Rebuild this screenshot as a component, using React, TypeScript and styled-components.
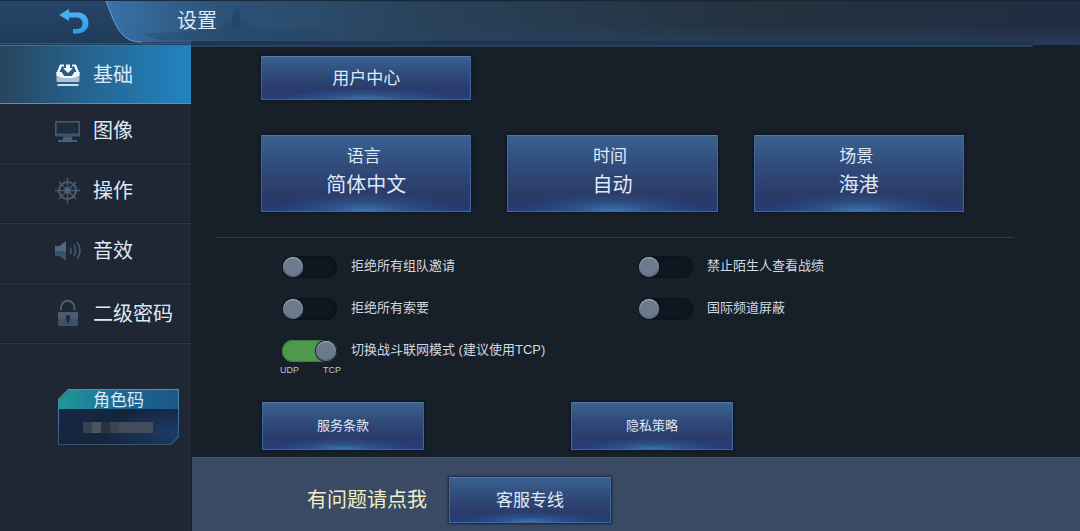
import React, { useState } from "react";
import styled, { createGlobalStyle } from "styled-components";

const GlobalStyle = createGlobalStyle`
  *, *::before, *::after { box-sizing: border-box; }
  html, body { margin: 0; background: #171f28; }
  body, button, input { font-family: "Noto Sans CJK SC", "Noto Sans", sans-serif; }
  button { margin: 0; padding: 0; border: 0; background: none; color: inherit; cursor: pointer; }
`;

const Page = styled.div`
  display: flex;
  flex-direction: column;
  min-height: 100vh;
  color: #dfe8f6;
`;

const Header = styled.header`
  position: relative;
  z-index: 1;
  display: flex;
  align-items: flex-start;
  height: 45px;
  background:
    linear-gradient(180deg, #13202e 0, rgba(19, 32, 46, 0) 2px),
    linear-gradient(0deg, rgba(42, 66, 102, 0.7) 0, rgba(42, 66, 102, 0) 20px),
    linear-gradient(90deg, #2d5379 0, #2c4b69 25%, #273d52 48%, #24323f 70%, #222c43 100%);

  &::after {
    content: "";
    position: absolute;
    left: 191px;
    right: 47px;
    top: 41px;
    height: 6px;
    background: linear-gradient(180deg, #1f3650 0, #1f3650 4px, #27415f 4px);
  }
`;

const HeaderArt = styled.svg`
  position: absolute;
  left: 0;
  top: 0;
`;

const BackButton = styled.button`
  position: relative;
  display: flex;
  width: 32px;
  height: 28px;
  margin: 8px 87px 0 58px;
`;

const Title = styled.h1`
  position: relative;
  margin: 0;
  font-size: 20px;
  font-weight: 400;
  line-height: 40px;
`;

const Body = styled.div`
  display: flex;
  flex: 1;
`;

const Sidebar = styled.aside`
  flex: 0 0 192px;
  background: #1e2733;
  border-right: 1px solid #171e29;
`;

const Nav = styled.nav`
  display: flex;
  flex-direction: column;
`;

const NavItem = styled.button<{ $active?: boolean }>`
  display: flex;
  align-items: center;
  gap: 12px;
  height: 60px;
  padding: 0 0 8px 55px;
  font-size: 20px;
  line-height: 28px;
  text-align: left;
  border-bottom: 1px solid #2b3542;
  box-shadow: inset 0 -1px 0 #19212c;

  &:last-child { padding-bottom: 2px; }

  ${(p) =>
    p.$active &&
    `
    height: 59px;
    padding-bottom: 2px;
    background: linear-gradient(90deg, #27455f 0, #26638f 45%, #2184c0 100%);
    border-top: 1px solid #3b7199;
    border-bottom: 1px solid #4a97c6;
    box-shadow: none;
  `}
`;

const CodeCard = styled.button`
  display: block;
  width: 121px;
  margin: 45px 0 0 58px;
  padding: 1px;
  background: linear-gradient(180deg, #4a94b4 0, #44759a 50%, #36526f 100%);
  clip-path: polygon(10px 0, 100% 0, 100% calc(100% - 8px), calc(100% - 8px) 100%, 0 100%, 0 10px);
`;

const CodeCardInner = styled.span`
  display: block;
  background:
    radial-gradient(ellipse at 100% 80%, #1c3d68 0, rgba(28, 61, 104, 0) 45%),
    linear-gradient(160deg, #16294a 0, #14253d 50%, #15263f 100%);
  clip-path: polygon(10px 0, 100% 0, 100% calc(100% - 8px), calc(100% - 8px) 100%, 0 100%, 0 10px);
`;

const CodeTitle = styled.span`
  display: block;
  height: 19px;
  font-size: 17px;
  line-height: 18px;
  text-align: center;
  background: linear-gradient(90deg, #1f9a93 0, #21829a 25%, #1d6893 50%, #1c5788 100%);
`;

const Mosaic = styled.span`
  display: flex;
  height: 35px;
  padding: 13px 25px 11px 24px;
`;

const MosaicBlock = styled.span<{ $tone: string; $grow: number }>`
  flex: ${(p) => p.$grow};
  background: ${(p) => p.$tone};
`;

const Main = styled.main`
  display: flex;
  flex: 1;
  flex-direction: column;
  min-width: 0;
`;

const PanelButton = styled.button<{ $height: number; $size: number }>`
  display: flex;
  flex-direction: column;
  align-items: center;
  justify-content: center;
  height: ${(p) => p.$height}px;
  padding-bottom: 3px;
  font-size: ${(p) => p.$size}px;
  line-height: 28px;
  border: 1px solid #41669a;
  border-top-color: #55799f;
  background:
    radial-gradient(ellipse 42% 24% at 50% 100%, #3d75ad 0, rgba(52, 100, 158, 0.5) 45%, rgba(46, 86, 146, 0) 100%),
    linear-gradient(0deg, rgba(34, 66, 138, 0.7) 0, rgba(34, 66, 138, 0) 10px),
    linear-gradient(180deg, #3a6291 0, #304c7b 38%, #2b3d6c 72%, #263763 100%);
  box-shadow: 0 0 2px 1px rgba(10, 20, 42, 0.7);
`;

const TileButton = styled(PanelButton)`
  line-height: 29px;
  padding-bottom: 9px;
`;

const ButtonCaption = styled.span`
  padding-right: 5px;
  font-size: 17px;
`;

const Tiles = styled.section`
  display: grid;
  grid-template-columns: repeat(3, 1fr);
  gap: 35px 36px;
  padding: 11px 116px 25px 69px;
`;

const FullRow = styled.div`
  display: grid;
  grid-column: 1 / -1;
  grid-template-columns: subgrid;
`;

const Divider = styled.hr`
  width: auto;
  height: 1px;
  margin: 0 66px 0 25px;
  border: 0;
  background: #303b48;
`;

const Toggles = styled.section`
  display: grid;
  grid-template-columns: 1fr 1fr;
  gap: 20px 0;
  padding: 18px 86px 26px 90px;
`;

const ToggleItem = styled.div`
  display: grid;
  grid-template-columns: 55px 1fr;
  column-gap: 14px;
  align-items: start;
`;

const ToggleLabel = styled.label`
  font-family: "Liberation Sans", "Noto Sans CJK SC", sans-serif;
  font-size: 13px;
  line-height: 20px;
  white-space: nowrap;
  color: #d2d8e0;
`;

const Switch = styled.input`
  appearance: none;
  width: 55px;
  height: 22px;
  margin: 0;
  padding: 1px;
  border-radius: 11px;
  background: #0f161f;
  box-shadow: inset 0 0 2px 1px #0b1119;
  cursor: pointer;

  &::before {
    content: "";
    display: block;
    width: 20px;
    height: 20px;
    border-radius: 50%;
    background: #6c7a8d;
    box-shadow: inset 0 1px 1px #a9b4bf, inset 0 -1px 1px #56616f, 0 0 1px 1px #121a24;
  }

  &:checked {
    background: #4d9a4e;
    box-shadow: inset 0 0 1px 1px #3c7f41;
  }

  &:checked::before { margin-left: auto; }
`;

const Captions = styled.div`
  display: flex;
  justify-content: space-between;
  margin: 2px -4px 0 -2px;
  font-family: "Liberation Sans", sans-serif;
  font-size: 9px;
  line-height: 12px;
  color: #bcc4ce;
`;

const Links = styled.section`
  display: grid;
  grid-template-columns: 1fr 1fr;
  column-gap: 147px;
  padding: 0 347px 7px 70px;
`;

const Footer = styled.footer`
  display: flex;
  flex: 1;
  align-items: flex-start;
  gap: 22px;
  min-height: 74px;
  padding: 19px 20px 8px 115px;
  background: #3a4a64;
  border-top: 1px solid #455672;
`;

const FooterText = styled.span`
  font-size: 20px;
  line-height: 44px;
  color: #f0eec6;
`;

const SupportSlot = styled.div`
  display: grid;
  flex: 0 0 162px;
`;

function HeaderDrawing() {
  return (
    <HeaderArt width="420" height="45" viewBox="0 0 420 45" aria-hidden="true">
      <defs>
        <linearGradient id="left" x1="0" y1="0" x2="0" y2="1">
          <stop offset="0" stopColor="#25456a" />
          <stop offset="1" stopColor="#1e3b58" />
        </linearGradient>
        <linearGradient id="tab" x1="0" y1="0" x2="1" y2="0">
          <stop offset="0" stopColor="#3978b2" stopOpacity="0.9" />
          <stop offset="0.3" stopColor="#386998" stopOpacity="0.75" />
          <stop offset="1" stopColor="#2c4b69" stopOpacity="0" />
        </linearGradient>
        <linearGradient id="shade" x1="0" y1="0" x2="1" y2="0">
          <stop offset="0" stopColor="#22415f" stopOpacity="0" />
          <stop offset="0.4" stopColor="#22415f" stopOpacity="0.4" />
          <stop offset="1" stopColor="#22415f" stopOpacity="0" />
        </linearGradient>
      </defs>
      <path d="M0 1H106C111 14 115 26 122 34Q128 42 142 42V45H0Z" fill="url(#left)" />
      <path d="M106 1C111 14 115 26 122 34Q128 42 142 42H420V1Z" fill="url(#tab)" />
      <path d="M106 1C111 14 115 26 122 34Q128 42 142 42H420V1Z" fill="url(#shade)" />
      <path
        d="M142 34L176 32L205 29L222 27L225 21L232 20L234 14L236 9L238 8L240 14L242 20L248 21L252 27L275 29L338 32L328 40H158Z"
        fill="#213f5c"
        opacity="0.3"
      />
      <path d="M232 27V16L236 8L240 15V27Z" fill="#213f5c" opacity="0.35" />
      <path d="M106 1C111 14 115 26 122 34Q128 42 142 42" fill="none" stroke="#6f9ac2" strokeWidth="1" />
      <path d="M0 43.5H191" stroke="#2b5880" strokeWidth="1" />
    </HeaderArt>
  );
}

function BackIcon() {
  return (
    <svg width="32" height="28" viewBox="0 0 32 28" aria-hidden="true">
      <defs>
        <linearGradient id="back" x1="0" y1="0" x2="0" y2="1">
          <stop offset="0" stopColor="#4bb6f5" />
          <stop offset="1" stopColor="#3598e4" />
        </linearGradient>
      </defs>
      <path
        d="M1 7L11 1V4.500H20C26 4.500 30.500 9 30.500 15S26 25.500 19 25.500H15V21H19C22.500 21 24.500 18.500 24.500 15.500S22.500 9.500 19 9.500H11V13Z"
        fill="url(#back)"
      />
    </svg>
  );
}

function Icon({ children }: { children: React.ReactNode }) {
  return (
    <svg width="26" height="28" viewBox="0 0 26 28" aria-hidden="true">
      {children}
    </svg>
  );
}

const basicIcon = (
  <Icon>
    <path d="M1.500 13L5 4.500H9V6.500H6.800L4.200 13ZM24.500 13L21 4.500H17V6.500H19.200L21.800 13Z" fill="#f2f7fc" />
    <path d="M1.500 12H6.500L9 16H17L19.500 12H24.500V20.500Q24.500 22 23 22H3Q1.500 22 1.500 20.500Z" fill="#aebfd6" />
    <path d="M1.500 12H6.500L9 16H17L19.500 12H24.500V15.500L18.500 18H7.500L1.500 15.500Z" fill="#f2f7fc" />
    <path d="M11 4.500H15V8H18L13 13L8 8H11Z" fill="#f2f7fc" />
    <path d="M2.500 25H23.500" stroke="#e2ebf4" strokeWidth="1.800" />
  </Icon>
);

const displayIcon = (
  <Icon>
    <rect x="0.800" y="5.800" width="23.400" height="13" fill="#1f2c3a" stroke="#4d6073" strokeWidth="1.400" />
    <path d="M0.200 17.500H24.800V20.500H0.200Z" fill="#3d546c" />
    <path d="M8.500 20.500H16.500L17.500 24H22V26H3V24H7.500Z" fill="#45607c" />
  </Icon>
);

const wheelIcon = (
  <Icon>
    <g stroke="#4c5c6d" fill="none">
      <circle cx="12.500" cy="14.500" r="8.500" strokeWidth="2" />
      <path
        d="M12.500 1.500V27.500M0 14.500H25M3.800 5.800L21.200 23.200M21.200 5.800L3.800 23.200"
        strokeWidth="1.300"
      />
    </g>
    <circle cx="12.500" cy="14.500" r="3.200" fill="#48647f" />
  </Icon>
);

const soundIcon = (
  <Icon>
    <path d="M0 10H4.500L11 5V24.500L4.500 20H0Z" fill="#4a6b85" />
    <path d="M0 15H11V24.500L4.500 20H0Z" fill="#3b5369" />
    <path d="M15 11.500Q17.500 14.700 15 18" fill="none" stroke="#435365" strokeWidth="1.800" />
    <path d="M19 9Q22 14.500 19 20" fill="none" stroke="#435365" strokeWidth="1.800" />
    <path d="M22 6Q28 14.500 22 23" fill="none" stroke="#435365" strokeWidth="1.800" />
  </Icon>
);

const lockIcon = (
  <Icon>
    <path d="M6 11V8.500A6.700 6.700 0 0 1 19.400 8.500V11" fill="none" stroke="#4d5b6b" strokeWidth="2" />
    <rect x="3" y="13" width="20" height="14" rx="1" fill="#4a5b6f" />
    <path d="M3 20H23V26Q23 27 22 27H4Q3 27 3 26Z" fill="#3f5165" />
    <path d="M13 16A2.400 2.400 0 0 1 14.200 20.400V23.500H11.800V20.400A2.400 2.400 0 0 1 13 16Z" fill="#1e2733" />
  </Icon>
);

const navItems = [
  { label: "基础", icon: basicIcon },
  { label: "图像", icon: displayIcon },
  { label: "操作", icon: wheelIcon },
  { label: "音效", icon: soundIcon },
  { label: "二级密码", icon: lockIcon },
];

const tiles = [
  { caption: "语言", value: "简体中文" },
  { caption: "时间", value: "自动" },
  { caption: "场景", value: "海港" },
];

const toggles = [
  { id: "team", label: "拒绝所有组队邀请" },
  { id: "stranger", label: "禁止陌生人查看战绩" },
  { id: "request", label: "拒绝所有索要" },
  { id: "channel", label: "国际频道屏蔽" },
  { id: "network", label: "切换战斗联网模式 (建议使用TCP)", on: true, captions: ["UDP", "TCP"] },
];

export default function App() {
  const [active, setActive] = useState("基础");

  return (
    <Page>
      <GlobalStyle />
      <Header>
        <HeaderDrawing />
        <BackButton aria-label="返回">
          <BackIcon />
        </BackButton>
        <Title>设置</Title>
      </Header>
      <Body>
        <Sidebar>
          <Nav>
            {navItems.map((item) => (
              <NavItem key={item.label} $active={item.label === active} onClick={() => setActive(item.label)}>
                {item.icon}
                {item.label}
              </NavItem>
            ))}
          </Nav>
          <CodeCard>
            <CodeCardInner>
              <CodeTitle>角色码</CodeTitle>
              <Mosaic>
                <MosaicBlock $tone="#35414f" $grow={9} />
                <MosaicBlock $tone="#4b5663" $grow={9} />
                <MosaicBlock $tone="#283443" $grow={9} />
                <MosaicBlock $tone="#394553" $grow={9} />
                <MosaicBlock $tone="#424d5b" $grow={35} />
              </Mosaic>
            </CodeCardInner>
          </CodeCard>
        </Sidebar>
        <Main>
          <Tiles>
            <FullRow>
              <PanelButton $height={44} $size={17}>用户中心</PanelButton>
            </FullRow>
            {tiles.map((tile) => (
              <TileButton key={tile.caption} $height={77} $size={20}>
                <ButtonCaption>{tile.caption}</ButtonCaption>
                {tile.value}
              </TileButton>
            ))}
          </Tiles>
          <Divider />
          <Toggles>
            {toggles.map((toggle) => (
              <ToggleItem key={toggle.id}>
                <Switch type="checkbox" role="switch" id={toggle.id} defaultChecked={toggle.on} />
                <ToggleLabel htmlFor={toggle.id}>{toggle.label}</ToggleLabel>
                {toggle.captions && (
                  <Captions>
                    {toggle.captions.map((text) => (
                      <span key={text}>{text}</span>
                    ))}
                  </Captions>
                )}
              </ToggleItem>
            ))}
          </Toggles>
          <Links>
            <PanelButton $height={48} $size={13}>服务条款</PanelButton>
            <PanelButton $height={48} $size={13}>隐私策略</PanelButton>
          </Links>
          <Footer>
            <FooterText>有问题请点我</FooterText>
            <SupportSlot>
              <PanelButton $height={46} $size={17}>客服专线</PanelButton>
            </SupportSlot>
          </Footer>
        </Main>
      </Body>
    </Page>
  );
}
